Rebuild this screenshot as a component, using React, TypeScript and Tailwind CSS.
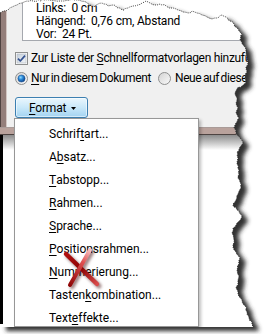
import React from "react";

type P = [number, number];

function jag(keys: P[], seed: number, step = 2.2, amp = 1.5): P[] {
  let s = seed;
  const rnd = () => {
    s = (s * 16807) % 2147483647;
    return s / 2147483647 - 0.5;
  };
  const out: P[] = [];
  for (let i = 0; i < keys.length - 1; i++) {
    const [ax, ay] = keys[i];
    const [bx, by] = keys[i + 1];
    const d = Math.hypot(bx - ax, by - ay);
    const n = Math.max(1, Math.round(d / step));
    for (let k = 0; k < n; k++) {
      const t = k / n;
      const j = k === 0 ? 0 : 1;
      out.push([ax + (bx - ax) * t + rnd() * amp * j, ay + (by - ay) * t + rnd() * amp * j]);
    }
  }
  out.push(keys[keys.length - 1]);
  return out;
}

const topKeys: P[] = [
  [0, 13], [4, 11], [8, 10], [12, 7], [17, 5], [22, 3], [27, 1], [33, 1], [45, 0], [60, 1], [75, 0],
  [86, 2], [90, 5], [94, 7], [98, 4], [102, 3], [108, 6], [113, 5], [118, 8], [124, 10], [128, 8],
  [133, 6], [138, 5], [142, 3], [146, 1], [150, 3], [155, 5], [160, 4], [166, 6], [172, 8], [178, 10],
  [183, 12], [188, 13], [192, 11], [197, 13], [202, 15], [207, 17], [212, 19], [217, 18], [222, 15],
  [226, 17], [230, 21], [234, 24],
];
const rightKeys: P[] = [
  [234, 24], [238, 29], [242, 34], [240, 40], [244, 46], [246, 51], [247, 57], [248, 62], [246, 67],
  [247, 72], [245, 77], [246, 82], [242, 86], [237, 89], [235, 93], [237, 98], [236, 103], [238, 108],
  [236, 113], [239, 118], [236, 123], [234, 128], [236, 133], [240, 138], [243, 143], [240, 147],
  [237, 152], [238, 158], [237, 164], [239, 170], [238, 176], [240, 182], [241, 188], [238, 194],
  [236, 200], [233, 205], [237, 210], [242, 216], [238, 222], [233, 228], [232, 233], [234, 240],
  [233, 247], [236, 252], [240, 258], [239, 264], [237, 270], [239, 276], [238, 282], [236, 288],
  [238, 294], [242, 300], [245, 306], [247, 312], [249, 318], [252, 324], [253, 327],
];

const torn = jag([...topKeys, ...rightKeys.slice(1)], 12345);
const tornStr = torn.map(([x, y]) => `${x.toFixed(1)},${y.toFixed(1)}`).join(" L");
const paperPath = `M0,327 L${tornStr} L253,327 Z`;
const outsidePath = `M-20,-20 H290 V360 H-20 Z ${paperPath}`;
const tornPoints = torn.map(([x, y]) => `${x.toFixed(1)},${y.toFixed(1)}`).join(" ");

function U({ children }: { children: React.ReactNode }) {
  return <span className="underline underline-offset-2 decoration-1">{children}</span>;
}

function CheckBox() {
  return (
    <svg width="13" height="13" viewBox="0 0 13 13" className="shrink-0">
      <defs>
        <linearGradient id="cbg" x1="0" y1="0" x2="1" y2="1">
          <stop offset="0" stopColor="#c5cfdb" />
          <stop offset="1" stopColor="#f3f5f8" />
        </linearGradient>
      </defs>
      <rect x="0.5" y="0.5" width="12" height="12" fill="#fff" stroke="#8e8f8f" />
      <rect x="2" y="2" width="9" height="9" fill="url(#cbg)" stroke="#aeb4bd" strokeWidth="0.6" />
      <path d="M3 6.6 L5.3 9 L10 3.6" fill="none" stroke="#34518f" strokeWidth="1.7" strokeLinejoin="round" />
    </svg>
  );
}

function Radio({ on }: { on?: boolean }) {
  return (
    <svg width="13" height="13" viewBox="0 0 13 13" className="shrink-0">
      <defs>
        <linearGradient id="rbg" x1="0" y1="0" x2="1" y2="1">
          <stop offset="0" stopColor="#d2d2d2" />
          <stop offset="1" stopColor="#fbfbfb" />
        </linearGradient>
        <radialGradient id="rdot" cx="0.38" cy="0.35" r="0.7">
          <stop offset="0" stopColor="#8fdcff" />
          <stop offset="0.45" stopColor="#2a86d6" />
          <stop offset="1" stopColor="#0b3f86" />
        </radialGradient>
      </defs>
      <circle cx="6.5" cy="6.5" r="6" fill="url(#rbg)" stroke="#8e8f8f" />
      {on && <circle cx="6.5" cy="6.5" r="3.6" fill="url(#rdot)" stroke="#1d4f8c" strokeWidth="0.5" />}
    </svg>
  );
}

const items: [string, string, string][] = [
  ["Schrif", "t", "art..."],
  ["A", "b", "satz..."],
  ["", "T", "abstopp..."],
  ["", "R", "ahmen..."],
  ["", "S", "prache..."],
  ["", "P", "ositionsrahmen..."],
  ["", "N", "ummerierung..."],
  ["Tasten", "k", "ombination..."],
  ["Text", "e", "ffekte..."],
];

export default function App() {
  return (
    <div className="relative w-[266px] h-[334px] overflow-hidden bg-white font-['Roboto',sans-serif] text-[12px] leading-[14px] text-black">
      {/* dialog */}
      <div className="flex flex-col">
        <div className="flex h-[127px]">
          <div className="w-[7px] shrink-0 border-l border-l-[#4f4240] border-r border-r-[#d3c6c3] bg-[#947e7a]" />
          <div className="flex flex-1 flex-col bg-[#f0f0f0]">
            <div className="ml-[15px] flex h-[41px] shrink-0 flex-col border-l border-b border-[#a5a8ae] bg-white pl-[13px] pt-[2px] whitespace-pre tracking-[-0.2px]">
              <div className="h-[13px] shrink-0 leading-[13px]">Links:  0 cm</div>
              <div className="h-[13px] shrink-0 leading-[13px]">Hängend:  0,76 cm, Abstand</div>
              <div className="h-[12px] shrink-0 leading-[13px]">Vor:  24 Pt.</div>
            </div>
            <div className="mt-[7px] flex h-[20px] items-center gap-[3px] pl-[8px] whitespace-nowrap tracking-[-0.3px]">
              <CheckBox />
              <span>
                Zur Liste der <U>S</U>chnellformatvorlagen hinzufügen
              </span>
            </div>
            <div className="flex h-[20px] items-center pl-[8px] whitespace-nowrap tracking-[-0.4px] [word-spacing:-1px]">
              <div className="flex w-[143px] items-center gap-[3px]">
                <Radio on />
                <span>
                  <U>N</U>ur in diesem Dokument
                </span>
              </div>
              <div className="flex items-center gap-[4px]">
                <Radio />
                <span>Neue auf diesen Vorlagen basierende Dokumente</span>
              </div>
            </div>
            <div className="ml-[8px] mt-[9px] flex h-[21px] w-[73px] items-center rounded-[3px] border border-[#3c7fb1] bg-gradient-to-b from-[#eaf6fd] via-[#c9e8f9] to-[#a3d3f1] pl-[13px] shadow-[inset_0_0_0_1px_rgba(255,255,255,0.55)]">
              <span className="tracking-[-0.2px]">
                <U>F</U>ormat
              </span>
              <svg width="5" height="3" viewBox="0 0 5 3" className="ml-[5px] mt-[1px]">
                <path d="M0 0 H5 L2.5 3 Z" fill="#000" />
              </svg>
            </div>
          </div>
        </div>
        <div className="h-[1px] bg-[#a99b98]" />
        <div className="h-[6px] bg-[#b9a29c]" />
        <div className="h-[1px] bg-[#4e4442]" />
        <div className="flex">
          <div className="h-[189px] w-[3px] bg-black" />
          <div className="h-[15px] flex-1 bg-gradient-to-b from-[#8d8d8d] to-white" />
        </div>
      </div>

      {/* dropdown menu */}
      <div className="absolute left-[14px] top-[118px] h-[209px] w-[185px] overflow-hidden border border-[#979797] bg-white pt-[3px] shadow-[2px_2px_3px_rgba(0,0,0,0.25)]">
        {items.map(([a, u, b], i) => (
          <div key={i} className="flex h-[23px] items-center pl-[34px] whitespace-pre">
            {a}
            <U>{u}</U>
            {b}
          </div>
        ))}
      </div>

      {/* red cross */}
      <svg className="absolute left-[58px] top-[244px]" width="48" height="48" viewBox="0 0 48 48">
        <defs>
          <linearGradient id="xa" gradientUnits="userSpaceOnUse" x1="8" y1="10" x2="39" y2="40">
            <stop offset="0" stopColor="#b01010" />
            <stop offset="0.5" stopColor="#8c0202" />
            <stop offset="1" stopColor="#d84a4a" />
          </linearGradient>
          <linearGradient id="xc" gradientUnits="userSpaceOnUse" x1="32" y1="6" x2="12" y2="41">
            <stop offset="0" stopColor="#f7c2c2" />
            <stop offset="0.35" stopColor="#e05050" />
            <stop offset="1" stopColor="#900606" />
          </linearGradient>
          <filter id="xb" x="-30%" y="-30%" width="160%" height="160%">
            <feGaussianBlur stdDeviation="1.6" />
          </filter>
        </defs>
        <g filter="url(#xb)" opacity="0.5">
          <line x1="10" y1="12" x2="41" y2="42" stroke="#3a0000" strokeWidth="5" strokeLinecap="round" />
          <line x1="34" y1="8" x2="14" y2="43" stroke="#3a0000" strokeWidth="4.5" strokeLinecap="round" />
        </g>
        <line x1="8" y1="10" x2="39" y2="40" stroke="url(#xa)" strokeWidth="4.5" strokeLinecap="round" />
        <line x1="32" y1="6" x2="12" y2="41" stroke="url(#xc)" strokeWidth="4" strokeLinecap="round" />
      </svg>

      {/* torn paper edge with drop shadow */}
      <svg className="absolute inset-0" width="266" height="334" viewBox="0 0 266 334">
        <defs>
          <mask id="outside" maskUnits="userSpaceOnUse" x="-20" y="-20" width="310" height="380">
            <rect x="-20" y="-20" width="310" height="380" fill="#fff" />
            <path d={paperPath} fill="#000" />
          </mask>
          <filter id="sb" filterUnits="userSpaceOnUse" x="-20" y="-20" width="310" height="380">
            <feGaussianBlur stdDeviation="2.3" />
          </filter>
        </defs>
        <path d={outsidePath} fill="#fff" fillRule="evenodd" />
        <g mask="url(#outside)">
          <path d={paperPath} transform="translate(6,4)" fill="#333333" filter="url(#sb)" />
        </g>
        <polyline points={tornPoints} fill="none" stroke="#1e1e1e" strokeWidth="1" strokeDasharray="1 1.2" opacity="0.85" />
      </svg>
    </div>
  );
}
